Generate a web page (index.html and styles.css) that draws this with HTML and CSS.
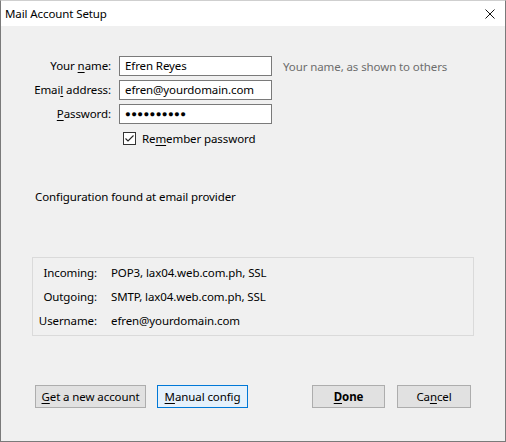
FILE: index.html
```html
<!DOCTYPE html>
<html lang="en">
  <head>
    <meta charset="UTF-8" />
    <title>Mail Account Setup</title>
    <link rel="stylesheet" href="styles.css">
  </head>
  <body>
    <div class="window">
      <div class="titlebar">
        <span class="title">Mail Account Setup</span>
        <svg class="close" width="10" height="10" viewBox="0 0 10 10">
          <path d="M0.5 0.5 L9.5 9.5 M9.5 0.5 L0.5 9.5" stroke="#111" stroke-width="1" fill="none" />
        </svg>
      </div>

      <div class="content">
        <form class="fields">
          <label class="lbl">Your <u>n</u>ame:</label>
          <div class="field">Efren Reyes</div>
          <span class="hint">Your name, as shown to others</span>

          <label class="lbl">Emai<u>l</u> address:</label>
          <div class="field">efren@yourdomain.com</div>
          <span></span>

          <label class="lbl"><u>P</u>assword:</label>
          <div class="field dots">●●●●●●●●●●</div>
          <span></span>
        </form>

        <div class="remember">
          <svg class="check" width="13" height="13" viewBox="0 0 13 13">
            <rect x="0.5" y="0.5" width="12" height="12" fill="#fff" stroke="#333" />
            <path d="M2.5 6.5 L5 9 L10.5 3.5" stroke="#222" stroke-width="1.1" fill="none" />
          </svg>
          <span>Re<u>m</u>ember password</span>
        </div>

        <p class="status">Configuration found at email provider</p>

        <div class="info">
          <div class="row"><span class="key">Incoming:</span><span>POP3, lax04.web.com.ph, SSL</span></div>
          <div class="row"><span class="key">Outgoing:</span><span>SMTP, lax04.web.com.ph, SSL</span></div>
          <div class="row"><span class="key">Username:</span><span>efren@yourdomain.com</span></div>
        </div>

        <div class="buttons">
          <button class="btn new"><u>G</u>et a new account</button>
          <button class="btn manual"><u>M</u>anual config</button>
          <span class="spacer"></span>
          <button class="btn done"><u>D</u>one</button>
          <button class="btn cancel">Ca<u>n</u>cel</button>
        </div>
      </div>
    </div>
  </body>
</html>
```

FILE: styles.css
```css
body {
  margin: 0;
  font-family: "Noto Sans", "Open Sans", sans-serif;
  font-size: 11.5px;
  letter-spacing: -0.1px;
  color: #000;
  background-color: #fff;
}
u {
  text-decoration: underline;
  text-underline-offset: 2px;
}
.window {
  width: 506px;
  height: 442px;
  box-sizing: border-box;
  border: 1px solid #7a7a7a;
  border-top-color: #cfcfcf;
  background-color: #f0f0f0;
  display: flex;
  flex-direction: column;
}
.titlebar {
  height: 25px;
  background-color: #fff;
  display: flex;
  align-items: center;
  justify-content: space-between;
  padding: 0 10px 0 4px;
}
.title {
  color: #000;
}
.close {
  display: block;
}
.content {
  flex: 1;
  display: flex;
  flex-direction: column;
  padding: 30px 0 0 0;
}
.fields {
  display: grid;
  grid-template-columns: 103px 153px auto;
  column-gap: 8px;
  row-gap: 4px;
  margin: 0 0 0 7px;
  align-items: center;
}
.lbl {
  text-align: right;
  line-height: 20px;
}
.field {
  height: 20px;
  box-sizing: border-box;
  border: 1px solid #7a7a7a;
  background-color: #fff;
  padding: 0 5px;
  line-height: 18px;
  white-space: nowrap;
  overflow: hidden;
}
.dots {
  font-size: 9.5px;
  letter-spacing: 0.4px;
}
.hint {
  color: #6d6d6d;
  margin-left: 3px;
}
.remember {
  display: flex;
  align-items: center;
  gap: 6px;
  margin: 8px 0 0 122px;
  height: 13px;
}
.check {
  display: block;
}
.status {
  margin: 44px 0 0 34px;
  line-height: 16px;
}
.info {
  margin: 52px 31px 0 31px;
  border: 1px solid #dadada;
  padding: 3px 0 2px;
}
.row {
  display: grid;
  grid-template-columns: 64px auto;
  column-gap: 14px;
  line-height: 24px;
}
.key {
  text-align: right;
}
.buttons {
  display: flex;
  align-items: center;
  gap: 11px;
  margin: 49px 34px 0 34px;
}
.spacer {
  flex: 1;
}
.btn {
  flex-shrink: 0;
  height: 23px;
  box-sizing: border-box;
  border: 1px solid #adadad;
  background-color: #e1e1e1;
  font-family: inherit;
  font-size: 11.5px;
  letter-spacing: -0.1px;
  color: #000;
  padding: 0;
}
.new {
  width: 111px;
}
.manual {
  width: 91px;
  background-color: #e5f1fb;
  border-color: #0078d7;
}
.done {
  width: 73px;
  font-weight: bold;
}
.cancel {
  width: 74px;
  margin-left: 1px;
}
```
